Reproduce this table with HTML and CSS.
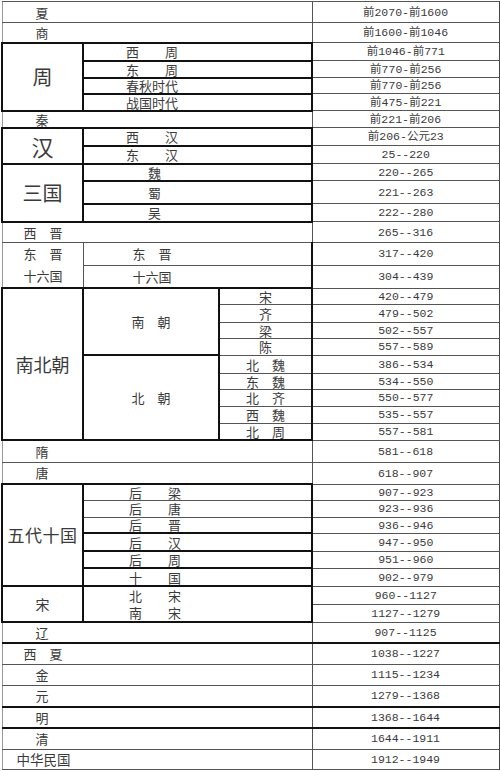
FILE: index.html
```
<!DOCTYPE html>
<html lang="zh">
<head>
<meta charset="utf-8">
<title>中国历代年表</title>
<link rel="stylesheet" href="styles.css">
</head>
<body>
<table class="chron">
<colgroup><col class="c1"><col class="c2"><col class="c3"><col class="c4"></colgroup>
<tr class="r21"><td colspan="3" class="nm lg">夏</td><td class="dt">前2070-前1600</td></tr>
<tr class="r20"><td colspan="3" class="nm lg">商</td><td class="dt">前1600-前1046</td></tr>
<tr class="r18"><td rowspan="4" class="big g">周</td><td colspan="2" class="sub g">西　　周</td><td class="dt">前1046-前771</td></tr>
<tr class="r17"><td colspan="2" class="sub g">东　　周</td><td class="dt">前770-前256</td></tr>
<tr class="r16"><td colspan="2" class="sub g">春秋时代</td><td class="dt">前770-前256</td></tr>
<tr class="r17"><td colspan="2" class="sub g">战国时代</td><td class="dt">前475-前221</td></tr>
<tr class="r17"><td colspan="3" class="nm lg">秦</td><td class="dt">前221-前206</td></tr>
<tr class="r18"><td rowspan="2" class="big han g">汉</td><td colspan="2" class="sub g">西　　汉</td><td class="dt">前206-公元23</td></tr>
<tr class="r18"><td colspan="2" class="sub g">东　　汉</td><td class="dt">25--220</td></tr>
<tr class="r17"><td rowspan="3" class="big g">三国</td><td colspan="2" class="sub3 g">魏</td><td class="dt">220--265</td></tr>
<tr class="r23"><td colspan="2" class="sub3 g">蜀</td><td class="dt">221--263</td></tr>
<tr class="r18"><td colspan="2" class="sub3 g">吴</td><td class="dt">222--280</td></tr>
<tr class="r21"><td colspan="3" class="nm lg2">西　晋</td><td class="dt">265--316</td></tr>
<tr class="r22"><td rowspan="2" class="nm lg2 two">东　晋<br>十六国</td><td colspan="2" class="sub4 gr">东　晋</td><td class="dt">317--420</td></tr>
<tr class="r22"><td colspan="2" class="sub4 gr bb">十六国</td><td class="dt">304--439</td></tr>
<tr class="r16"><td rowspan="9" class="big nb g">南北朝</td><td rowspan="4" class="ctr g">南　朝</td><td class="ctr gr">宋</td><td class="dt">420--479</td></tr>
<tr class="r18"><td class="ctr gr">齐</td><td class="dt">479--502</td></tr>
<tr class="r16"><td class="ctr gr">梁</td><td class="dt">502--557</td></tr>
<tr class="r17"><td class="ctr gr">陈</td><td class="dt">557--589</td></tr>
<tr class="r18"><td rowspan="5" class="ctr g">北　朝</td><td class="ctr gr">北　魏</td><td class="dt">386--534</td></tr>
<tr class="r16"><td class="ctr gr">东　魏</td><td class="dt">534--550</td></tr>
<tr class="r17"><td class="ctr gr">北　齐</td><td class="dt">550--577</td></tr>
<tr class="r17"><td class="ctr gr">西　魏</td><td class="dt">535--557</td></tr>
<tr class="r17"><td class="ctr gr bb">北　周</td><td class="dt">557--581</td></tr>
<tr class="r22"><td colspan="3" class="nm lg">隋</td><td class="dt">581--618</td></tr>
<tr class="r22"><td colspan="3" class="nm lg">唐</td><td class="dt">618--907</td></tr>
<tr class="r16"><td rowspan="6" class="big wd g">五代十国</td><td colspan="2" class="sub5 gr tt">后　　梁</td><td class="dt">907--923</td></tr>
<tr class="r17"><td colspan="2" class="sub5 gr">后　　唐</td><td class="dt">923--936</td></tr>
<tr class="r16"><td colspan="2" class="sub5 gr bb">后　　晋</td><td class="dt">936--946</td></tr>
<tr class="r18"><td colspan="2" class="sub5 gr bb">后　　汉</td><td class="dt">947--950</td></tr>
<tr class="r17"><td colspan="2" class="sub5 gr bb">后　　周</td><td class="dt">951--960</td></tr>
<tr class="r18"><td colspan="2" class="sub5 gr">十　　国</td><td class="dt">902--979</td></tr>
<tr class="r17"><td rowspan="2" class="song g">宋</td><td colspan="2" rowspan="2" class="sub5 g two2">北　　宋<br>南　　宋</td><td class="dt">960--1127</td></tr>
<tr class="r17"><td class="dt">1127--1279</td></tr>
<tr class="r21"><td colspan="3" class="nm lg bb">辽</td><td class="dt bb">907--1125</td></tr>
<tr class="r21"><td colspan="3" class="nm lg2">西　夏</td><td class="dt">1038--1227</td></tr>
<tr class="r21"><td colspan="3" class="nm lg">金</td><td class="dt">1115--1234</td></tr>
<tr class="r22"><td colspan="3" class="nm lg bb">元</td><td class="dt bb">1279--1368</td></tr>
<tr class="r21"><td colspan="3" class="nm lg bb">明</td><td class="dt bb">1368--1644</td></tr>
<tr class="r21"><td colspan="3" class="nm lg">清</td><td class="dt">1644--1911</td></tr>
<tr class="r20"><td colspan="3" class="nm lg3">中华民国</td><td class="dt">1912--1949</td></tr>
</table>
</body>
</html>
```

FILE: styles.css
```
html, body {
  margin: 0;
  padding: 0;
  background: #fff;
}
body {
  padding: 1px 0 0 1px;
  font-family: "Noto Sans CJK SC", "Noto Sans", sans-serif;
  color: #3a3a3a;
}
.chron {
  border-collapse: collapse;
  table-layout: fixed;
  width: 497px;
  border-top: 1px solid #999;
}
.c1 { width: 81px; }
.c2 { width: 136px; }
.c3 { width: 93px; }
.c4 { width: 187px; }

.chron td {
  border: 1px solid #555;
  padding: 0;
  font-size: 13px;
  line-height: 13px;
  vertical-align: middle;
  white-space: nowrap;
}

.r16 { height: 16px; }
.r17 { height: 17px; }
.r18 { height: 18px; }
.r20 { height: 20px; }
.r21 { height: 21px; }
.r22 { height: 22px; }
.r23 { height: 23px; }

/* plain name rows */
.chron td.nm { border-left: 1px solid #999; }
.chron td.lg { padding-left: 33px; }
.chron td.lg2 { padding-left: 21px; }
.chron td.lg3 { padding-left: 14px; font-size: 13.5px; }
.chron td.two { line-height: 22px; }

/* grouped blocks */
.chron td.g { border: 2px solid #111; }
.chron td.gr { border-right: 2px solid #111; }
.chron td.bb { border-bottom: 2px solid #111; }
.chron td.tt { border-top: 2px solid #111; }

.chron td.big {
  text-align: center;
  font-size: 20px;
  line-height: 24px;
}
.chron td.han { font-size: 22px; }
.chron td.nb { font-size: 18px; }
.chron td.wd { font-size: 17px; letter-spacing: 0.5px; }
.chron td.song { text-align: center; font-size: 14px; }

.chron td.sub { padding-left: 42px; }
.chron td.sub3 { padding-left: 64px; }
.chron td.sub4 { padding-left: 49px; }
.chron td.sub5 { padding-left: 45px; }
.chron td.two2 { line-height: 17px; }
.chron td.ctr { text-align: center; }

/* dates */
.chron td.dt {
  text-align: center;
  font-family: "Liberation Mono", "Noto Sans CJK SC", monospace;
  font-size: 11.5px;
  color: #3a3a3a;
  border-right: 1px solid #444;
}
```
